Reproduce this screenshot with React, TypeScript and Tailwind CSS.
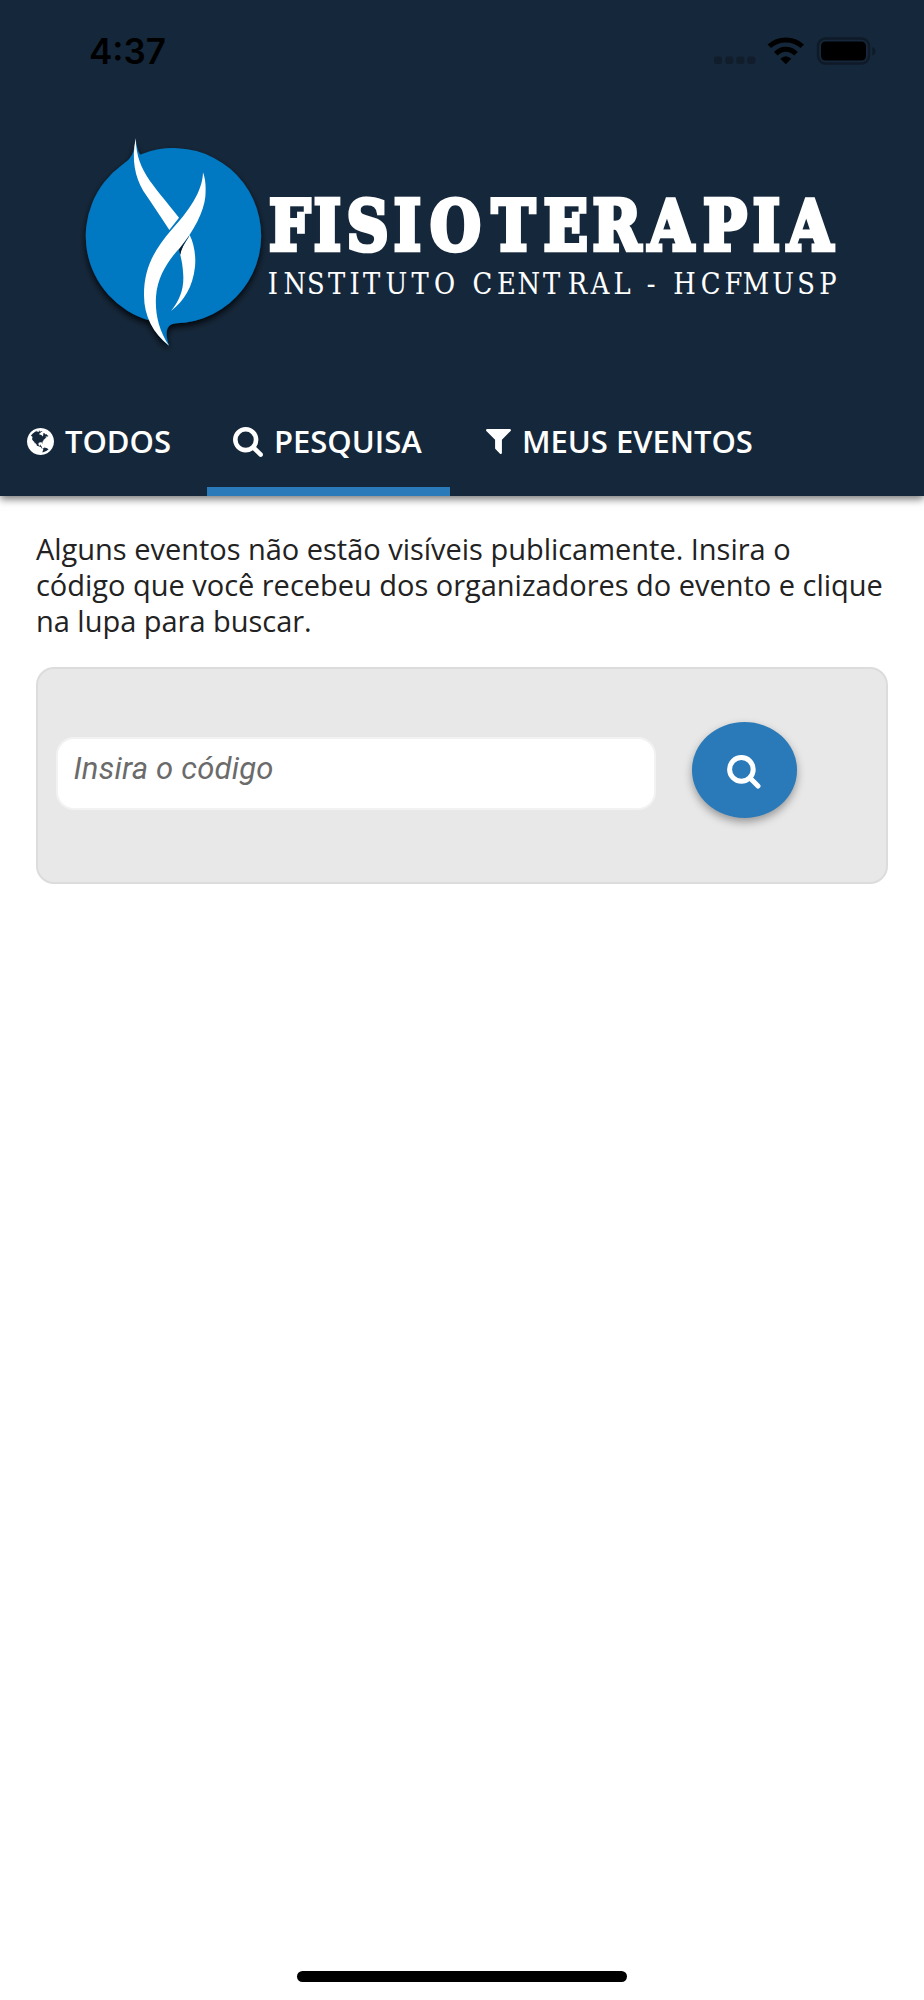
import { useState } from 'react';
import type { ReactNode } from 'react';

const GLOBE =
  'M768 128q209 0 385.5 103t279.5 279.5 103 385.5-103 385.5-279.5 279.5-385.5 103-385.5-103-279.5-279.5-103-385.5 103-385.5 279.5-279.5 385.5-103zm274 521q-2 1-9.5 9.5t-13.5 9.5q2 0 4.5-5t5-11 3.5-7q6-7 22-15 14-6 52-12 34-8 51 11-2-2 9.5-13t14.5-12q3-2 15-4.5t15-7.5l2-22q-12 1-17.5-7t-6.5-21q0 2-6 8 0-7-4.5-8t-11.5 1-9 1q-10-3-15-7.5t-8-16.5-4-15q-2-5-9.5-10.5t-9.5-10.5q-1-2-2.5-5.5t-3-6.5-4-5.5-5.5-2.5-7 5-7.5 10-4.5 5q-3-2-6-1.5t-4.5 1-4.5 3-5 3.5q-3 2-8.5 3t-8.5 2q15-5-1-11-10-4-16-3 9-4 7.5-12t-8.5-14h5q-1-4-8.5-8.5t-17.5-8.5-13-6q-8-5-34-9.5t-33-.5q-5 6-4.5 10.5t4 14 3.5 12.5q1 6-5.5 13t-6.5 12q0 7 14 15.5t10 21.5q-3 8-16 16t-16 12q-5 8-1.5 18.5t10.5 16.5q2 2 1.5 4t-3.5 4.5-5.5 4-6.5 3.5l-3 2q-11 5-20.5-6t-13.5-26q-7-25-16-30-23-8-29 1-5-13-41-26-25-9-58-4 6-1 0-15-7-15-19-12 3-6 4-17.5t1-13.5q3-13 12-23 1-1 7-8.5t9.5-13.5.5-6q35 4 50-11 5-5 11.5-17t10.5-17q9-6 14-5.5t14.5 5.5 14.5 5q14 1 15.5-11t-7.5-20q12 1 3-17-4-7-8-9-12-4-27 5-8 4 2 8-1-1-9.5 10.5t-16.5 17.5-16-5q-1-1-5.5-13.5t-9.5-13.5q-8 0-16 15 3-8-11-15t-24-8q19-12-8-27-7-4-20.5-5t-19.5 4q-5 7-5.5 11.5t5 8 10.5 5.5 11.5 4 8.5 3q14 10 8 14-2 1-8.5 3.5t-11.5 4.5-6 4q-3 4 0 14t-2 14q-5-5-9-17.5t-7-16.5q7 9-25 6l-10-1q-4 0-16 2t-20.5 1-13.5-8q-4-8 0-20 1-4 4-2-4-3-11-9.5t-10-8.5q-46 15-94 41 6 1 12-1 5-2 13-6.5t10-5.5q34-14 42-7l5-5q14 16 20 25-7-4-30-1-20 6-22 12 7 12 5 18-4-3-11.5-10t-14.5-11-15-5q-16 0-22 1-146 80-235 222 7 7 12 8 4 1 5 9t2.5 11 11.5-3q9 8 3 19 1-1 44 27 19 17 21 21 3 11-10 18-1-2-9-9t-9-4q-3 5 .5 18.5t10.5 12.5q-7 0-9.5 16t-2.5 35.5-1 23.5l2 1q-3 12 5.5 34.5t21.5 19.5q-13 3 20 43 6 8 8 9 3 2 12 7.5t15 10 10 10.5q4 5 10 22.5t14 23.5q-2 6 9.5 20t10.5 23q-1 0-2.5 1t-2.5 1q3 7 15.5 14t15.5 13q1 3 2 10t3 11 8 2q2-20-24-62-15-25-17-29-3-5-5.5-15.5t-4.5-14.5q2 0 6 1.5t8.5 3.5 7.5 4 2 3q-3 7 2 17.5t12 18.5 17 19 12 13q6 6 14 19.5t0 13.5q9 0 20 10.5t17 19.5q5 8 8 26t5 24q2 7 8.5 13.5t12.5 9.5l16 8 13 7q5 2 18.5 10.5t21.5 11.5q10 4 16 4t14.5-2.5 13.5-3.5q15-2 29 15t21 21q36 19 55 11-2 1 .5 7.5t8 15.5 9 14.5 5.5 8.5q5 6 18 15t18 15q6-4 7-9-3 8 7 20t18 10q14-3 14-32-31 15-49-18 0-1-2.5-5.5t-4-8.5-2.5-8.5 0-7.5 5-3q9 0 10-3.5t-2-12.5-4-13q-1-8-11-20t-12-15q-5 9-16 8t-16-9q0 1-1.5 5.5t-1.5 6.5q-13 0-15-1 1-3 2.5-17.5t3.5-22.5q1-4 5.5-12t7.5-14.5 4-12.5-4.5-9.5-17.5-2.5q-19 1-26 20-1 3-3 10.5t-5 11.5-9 7q-7 3-24 2t-24-5q-13-8-22.5-29t-9.5-37q0-10 2.5-26.5t3-25-5.5-24.5q3-2 9-9.5t10-10.5q2-1 4.5-1.5t4.5 0 4-1.5 3-6q-1-1-4-3-3-3-4-3 7 3 28.5-1.5t27.5 1.5q15 11 22-2 0-1-2.5-9.5t-.5-13.5q5 27 29 9 3 3 15.5 5t17.5 5q3 2 7 5.5t5.5 4.5 5-.5 8.5-6.5q10 14 12 24 11 40 19 44 7 3 11 2t4.5-9.5 0-14-1.5-12.5l-1-8v-18l-1-8q-15-3-18.5-12t1.5-18.5 15-18.5q1-1 8-3.5t15.5-6.5 12.5-8q21-19 15-35 7 0 11-9-1 0-5-3t-7.5-5-4.5-2q9-5 2-16 5-3 7.5-11t7.5-10q9 12 21 2 8-8 1-16 5-7 20.5-10.5t18.5-9.5q7 2 8-2t1-12 3-12q4-5 15-9t13-5l17-11q3-4 0-4 18 2 31-11 10-11-6-20 3-6-3-9.5t-15-5.5q3-1 11.5-.5t10.5-1.5q15-10-7-16-17-5-43 12zm-163 877q206-36 351-189-3-3-12.5-4.5t-12.5-3.5q-18-7-24-8 1-7-2.5-13t-8-9-12.5-8-11-7q-2-2-7-6t-7-5.5-7.5-4.5-8.5-2-10 1l-3 1q-3 1-5.5 2.5t-5.5 3-4 3 0 2.5q-21-17-36-22-5-1-11-5.5t-10.5-7-10-1.5-11.5 7q-5 5-6 15t-2 13q-7-5 0-17.5t2-18.5q-3-6-10.5-4.5t-12 4.5-11.5 8.5-9 6.5-8.5 5.5-8.5 7.5q-3 4-6 12t-5 11q-2-4-11.5-6.5t-9.5-5.5q2 10 4 35t5 38q7 31-12 48-27 25-29 40-4 22 12 26 0 7-8 20.5t-7 21.5q0 6 2 16z';
const SEARCH =
  'M1216 832q0-185-131.5-316.5t-316.5-131.5-316.5 131.5-131.5 316.5 131.5 316.5 316.5 131.5 316.5-131.5 131.5-316.5zm512 832q0 52-38 90t-90 38q-54 0-90-38l-343-342q-179 124-399 124-143 0-273.5-55.5t-225-150-150-225-55.5-273.5 55.5-273.5 150-225 225-150 273.5-55.5 273.5 55.5 225 150 150 225 55.5 273.5q0 220-124 399l343 343q37 37 37 90z';
const FILTER =
  'M1595 295q17 41-14 70l-493 493v742q0 42-39 59-13 5-25 5-27 0-45-19l-256-256q-19-19-19-45v-486l-493-493q-31-29-14-70 17-39 59-39h1280q42 0 59 39z';

// letter centres of the two wordmark lines
const TITLE_X = [289.7, 327.5, 367.5, 407.5, 455.5, 513.5, 565.7, 616.7, 671, 725, 766.3, 810.3];
const SUBTITLE_X = [
  273, 294.7, 316, 336.5, 354.5, 371.5, 396.5, 420, 444.5, 463, 482.5, 506.5, 528.7, 551.5, 577.5, 600, 622, 636, 651,
  665, 684.5, 710.5, 733.5, 756, 783, 806, 828,
];

const squeeze = (xs: number[], k: number) => xs.map((x) => (x / k).toFixed(1)).join(' ');

function StatusBar() {
  return (
    <div className="flex h-[101px] items-center justify-between pr-[47px] pl-[89px]">
      <span className="mt-[1px] font-['Inter',sans-serif] text-[35px] leading-none font-semibold text-black">4:37</span>
      <svg width="164" height="30" viewBox="713 35.5 164 30">
        <g fill="#121d2b">
          <rect x="714" y="56" width="8" height="7.5" rx="2.5" />
          <rect x="725.3" y="56" width="8" height="7.5" rx="2.5" />
          <rect x="736.3" y="56" width="8" height="7.5" rx="2.5" />
          <rect x="747.3" y="56" width="8" height="7.5" rx="2.5" />
        </g>
        <g fill="none" stroke="#000" strokeWidth="5">
          <path d="M769.3 45.8Q776 39.5 785.8 39.5T802.3 45.8" />
          <path d="M775.8 53.3Q780 48.7 785.8 48.7T796 53.3" />
        </g>
        <path d="M780.3 58.3Q785.8 53 791.3 58.3L785.8 63.7Z" />
        <rect x="818" y="38" width="51" height="25" rx="7.5" fill="none" stroke="#0f1a27" strokeWidth="2.4" />
        <rect x="821" y="41" width="45" height="19" rx="4.5" />
        <path d="M872.3 46.5c4.3 1.5 4.3 7 0 8.5z" fill="#0f1a27" />
      </svg>
    </div>
  );
}

function Logo() {
  return (
    <svg className="ml-[70px]" width="784" height="240" viewBox="70 120 784 240">
      <defs>
        <filter id="drop" x="-20%" y="-20%" width="140%" height="140%">
          <feDropShadow dx="0" dy="11" stdDeviation="9" floodColor="#000" floodOpacity="0.85" />
        </filter>
        <linearGradient id="fold" x1="0" y1="1" x2="1" y2="0">
          <stop offset="0" stopColor="#06101d" />
          <stop offset="1" stopColor="#1d3c5c" />
        </linearGradient>
      </defs>
      <g transform="translate(70 120) scale(.33333)">
        <path
          filter="url(#drop)"
          fill="#0079c2"
          d="M197 55C199 75 202 90 210 104A263 263 0 1 1 318 610C285 613 285 642 297 677C270 655 250 630 238 601A263 263 0 0 1 155 136C180 118 193 108 197 55Z"
        />
        <g fill="#fff">
          <path d="M197 55C199 110 212 142 240 183C268 222 302 260 327 293L298 330C272 290 246 250 220 213C195 170 184 120 197 55Z" />
          <path d="M359 345C373 372 378 410 375 440C368 502 342 542 303 573C328 543 341 510 340 470C339 440 335 420 330 402C335 380 350 365 359 345Z" />
        </g>
        <path fill="url(#fold)" d="M357 342Q342 356 327 389L331 405Q334 382 357 349Z" />
        <path
          fill="#fff"
          d="M399 157C398 215 355 275 304 330C252 390 222 445 222 525C222 590 250 640 297 677C266 630 255 580 258 530C262 470 295 420 330 383C370 335 402 275 406 230C408 200 407 180 399 157Z"
        />
      </g>
      <g fill="#fff" stroke="#fff" textAnchor="middle" fontFamily="'DejaVu Serif', serif">
        <text
          transform="scale(.84 1)"
          x={squeeze(TITLE_X, 0.84)}
          y="250"
          fontSize="69.5"
          fontWeight="700"
          strokeWidth="4.6"
          strokeMiterlimit="2"
        >
          FISIOTERAPIA
        </text>
        <text transform="scale(.86 1)" x={squeeze(SUBTITLE_X, 0.86)} y="293.8" fontSize="30" strokeWidth=".1">
          INSTITUTO CENTRAL - HCFMUSP
        </text>
      </g>
    </svg>
  );
}

interface TabProps {
  active?: boolean;
  className: string;
  icon: ReactNode;
  label: string;
}

function Tab({ active, className, icon, label }: TabProps) {
  return (
    <button
      className={`flex h-[109px] items-center border-b-[9px] pt-[8px] text-[31px] font-semibold tracking-[-0.02px] whitespace-nowrap ${
        active ? 'border-[#2a7ab9]' : 'border-transparent'
      } ${className}`}
    >
      {icon}
      <span>{label}</span>
    </button>
  );
}

export default function App() {
  const [code, setCode] = useState('');

  return (
    <div className="flex h-[2000px] w-[924px] flex-col bg-white font-['Open_Sans',sans-serif]">
      <header className="h-[496px] shrink-0 bg-[#15273a] text-white shadow-[0_3px_8px_rgba(0,0,0,0.55)]">
        <StatusBar />
        <div className="flex h-[286px] pt-[19px]">
          <Logo />
        </div>
        <nav className="flex">
          <Tab
            className="w-[207px] pl-[27px]"
            label="TODOS"
            icon={
              <svg className="mr-[11px]" width="27" height="27" viewBox="0 128 1536 1536" fill="currentColor">
                <path d={GLOBE} />
              </svg>
            }
          />
          <Tab
            active
            className="w-[243px] pl-[26px]"
            label="PESQUISA"
            icon={
              <svg className="mt-[2px] mr-[11px]" width="30" height="30" viewBox="64 128 1664 1664" fill="currentColor">
                <path d={SEARCH} />
              </svg>
            }
          />
          <Tab
            className="pl-[36px]"
            label="MEUS EVENTOS"
            icon={
              <svg className="mr-[11px]" width="25" height="25" viewBox="192 256 1408 1408" fill="currentColor">
                <path d={FILTER} />
              </svg>
            }
          />
        </nav>
      </header>

      <main className="flex grow flex-col px-[36px] pt-[35px]">
        <p className="text-[29px] leading-[36px] tracking-[-0.02px] text-[#222]">
          Alguns eventos não estão visíveis publicamente. Insira o
          <br />
          código que você recebeu dos organizadores do evento e clique
          <br />
          na lupa para buscar.
        </p>
        <form
          onSubmit={(e) => e.preventDefault()}
          className="mt-[28px] flex h-[217px] items-start rounded-[18px] border-2 border-[#dcdcdc] bg-[#e8e8e8] pl-[18px]"
        >
          <input
            value={code}
            onChange={(e) => setCode(e.target.value)}
            placeholder="Insira o código"
            className="mt-[68px] h-[73px] w-[600px] rounded-[18px] border-2 border-[#f2f2f2] bg-white px-[15.5px] pb-[11px] font-['Roboto',sans-serif] text-[31px] tracking-[0.2px] italic placeholder:text-[#6b6b6b]"
          />
          <button
            type="submit"
            aria-label="Buscar"
            className="mt-[53px] ml-[36px] flex h-[95.5px] w-[105px] items-center justify-center rounded-[50%] bg-[#2a7ab9] shadow-[0_4px_9px_rgba(0,0,0,0.35)]"
          >
            <svg className="mt-[4px] mr-[1px]" width="34" height="34" viewBox="0 0 34 34" fill="none" stroke="#fff">
              <circle cx="14.4" cy="14.4" r="11.8" strokeWidth="5" />
              <path d="M23 23L31 31" strokeWidth="5" strokeLinecap="round" />
            </svg>
          </button>
        </form>
      </main>

      <div className="mx-auto mb-[18px] h-[11px] w-[330px] shrink-0 rounded-full bg-black" />
    </div>
  );
}
